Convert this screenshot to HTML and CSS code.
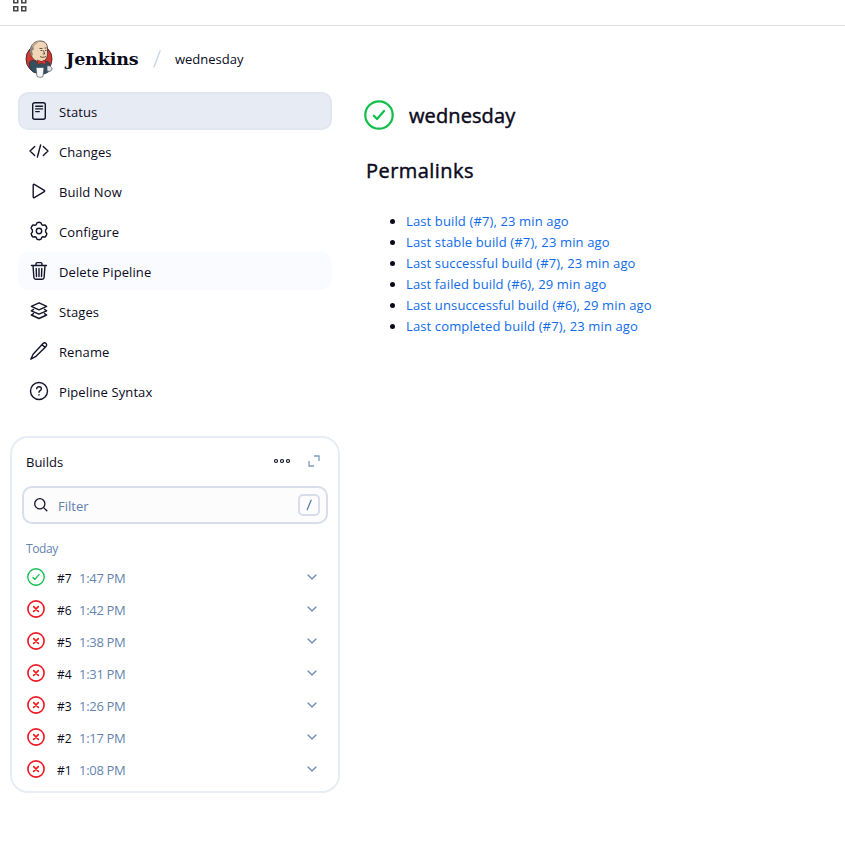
FILE: index.html
```html
<!DOCTYPE html>
<html lang="en">
<head>
<meta charset="utf-8">
<title>wednesday - Jenkins</title>
<link rel="stylesheet" href="styles.css">
</head>
<body>
<svg class="defs" aria-hidden="true">
  <symbol id="ok" viewBox="0 0 512 512"><g fill="none" stroke="currentColor" stroke-width="38" stroke-linecap="round" stroke-linejoin="round"><circle cx="256" cy="256" r="234"/><path d="M342 188 222 324l-54-56"/></g></symbol>
  <symbol id="bad" viewBox="0 0 512 512"><g fill="none" stroke="currentColor" stroke-width="46" stroke-linecap="round"><circle cx="256" cy="256" r="230"/><path d="m190 190 132 132M322 190 190 322"/></g></symbol>
  <symbol id="chev" viewBox="0 0 12 12"><path d="m2 4 4 4 4-4" fill="none" stroke="currentColor" stroke-width="1.3" stroke-linecap="round" stroke-linejoin="round"/></symbol>
</svg>
<div class="topbar">
  <svg width="16" height="16" viewBox="0 0 16 16" fill="none" stroke="#474747" stroke-width="1.600"><path d="M1.800 1.800h3.900v3.900H1.800zM9.800 1.800h3.900v3.900H9.800zM1.800 9.800h3.900v3.900H1.800zM9.800 9.800h3.900v3.900H9.800z"/></svg>
</div>
<header class="header">
  <svg class="logo" width="28" height="38" viewBox="0 0 28 38">
    <ellipse cx="14" cy="19" rx="13" ry="14" fill="#d33833" stroke="#3a2522" stroke-width=".9"/>
    <path d="M4.500 22c2-2 4-2 7 0l8-1 4 1c2 2 2 5 1 9-3 3-6 3-9 3.500L8 32C5 29 4 26 4.500 22Z" fill="#335061" stroke="#1c2d38" stroke-width=".6"/>
    <path d="M6 14C4 7 8 1 15 1c6 0 8 4 7.500 10 .5 7-2 10.500-6.500 10.500C12 22 7 20 6 14Z" fill="#f0d6b7" stroke="#3b302b" stroke-width=".8"/>
    <path d="M6 7c-2 3-1 6 0 9l2-1-1-4 2-2-1-3Z" fill="#8b8580"/>
    <path d="M7 5c2-3 5-4 8-4l-5 4-2 3Z" fill="#baa98f"/>
    <path d="M14.500 8.500h3M19.500 8h2M15.500 10.500h2M20 10.500h1.500M18.500 10.500l1.200 3.500h-2M15 16.500c2 1.200 4 1 6 0" fill="none" stroke="#55433c" stroke-width=".9"/>
    <path d="m12.500 20 4 1.500 4-1.500v4.500l-4-1.500-4 1.500Z" fill="#d33833" stroke="#73201d" stroke-width=".5"/>
    <path d="M11 27.500h8l-1 9c-2 1-4 1-6 0Z" fill="#f7f7f7" stroke="#45525a" stroke-width=".7"/>
    <path d="M22 26c3-1 5 1 5 3s-3 3-5 2Z" fill="#e3e1e0" stroke="#434f57" stroke-width=".7"/>
  </svg>
  <span class="brand">Jenkins</span>
  <svg class="slash" width="8" height="18" viewBox="0 0 8 18"><path d="M7 1 1 17" stroke="#ccd6e8" stroke-width="1.500" stroke-linecap="round"/></svg>
  <span class="crumb">wednesday</span>
</header>
<div class="layout">
  <aside class="side">
    <nav class="tasks">
      <a class="task active"><svg viewBox="0 0 20 20"><rect x="3.700" y="1.700" width="12.600" height="16.600" rx="2"/><path d="M6.700 5.200h6.800M6.700 7.900h6.800M6.700 10.600h3.600"/></svg><span>Status</span></a>
      <a class="task"><svg viewBox="0 0 20 20"><path d="M5.700 5.500 1 10l4.700 4.500M14.300 5.500 19 10l-4.700 4.500M11.600 4 8.400 16"/></svg><span>Changes</span></a>
      <a class="task"><svg viewBox="0 0 20 20"><path d="M4.200 4.100v11.800c0 .7.600 1 1.100.700l10-5.900c.5-.3.500-1 0-1.300l-10-6c-.5-.3-1.100 0-1.100.700Z"/></svg><span>Build Now</span></a>
      <a class="task"><svg viewBox="0 0 20 20"><circle cx="10" cy="10" r="2.700"/><path d="m8 1.800c1-.5 3-.5 4 0l.7 1.800 1.300.7 1.900-.4c1 .8 1.900 2.300 2 3.500L16.600 9v2l1.300 1.600c-.1 1.200-1 2.700-2 3.500l-1.900-.4-1.300.7-.7 1.800c-1 .5-3 .5-4 0l-.7-1.800-1.300-.7-1.900.4c-1-.8-1.900-2.300-2-3.500L3.400 11V9L2.100 7.400c.1-1.200 1-2.700 2-3.500l1.900.4 1.300-.7Z"/></svg><span>Configure</span></a>
      <a class="task hover"><svg viewBox="0 0 20 20"><path d="m4 4.500.9 12c.1 1.100.8 1.800 1.900 1.800h6.400c1.100 0 1.800-.7 1.900-1.800l.9-12M2.500 4.500h15M7 4V2.800C7 2 7.500 1.600 8.200 1.600h3.600c.7 0 1.200.4 1.200 1.200V4M7.200 7.500l.3 8M10 7.500v8M12.800 7.500l-.3 8"/></svg><span>Delete Pipeline</span></a>
      <a class="task"><svg viewBox="0 0 20 20"><path d="m10 1.800 7.700 3.500-7.700 3.500-7.700-3.500ZM4.500 8.400l-2.200 1.400 7.700 3.400 7.700-3.400-2.200-1.400M4.500 12.600l-2.200 1.400 7.700 3.500 7.700-3.500-2.200-1.400"/></svg><span>Stages</span></a>
      <a class="task"><svg viewBox="0 0 20 20"><path d="M14 2.600c1.100-1 2.200-1 3.100-.2.900 1 .8 2.100-.1 3.100L6.500 15.700l-4.700 2.500 2.300-4.900ZM13 3.600l3 3"/></svg><span>Rename</span></a>
      <a class="task"><svg viewBox="0 0 20 20"><circle cx="10" cy="10" r="8.500"/><path d="M7.700 7.700c.2-1.500 1.100-2 2.300-2 1.400 0 2.400.8 2.400 2 0 2-2.400 1.800-2.400 3.600M10 13.800v.2"/></svg><span>Pipeline Syntax</span></a>
    </nav>
    <section class="builds">
      <div class="builds-head">
        <span class="builds-title">Builds</span>
        <svg width="18" height="8" viewBox="0 0 18 8" fill="none" stroke="#14142b" stroke-width="1.200"><circle cx="3" cy="4" r="1.500"/><circle cx="9" cy="4" r="1.500"/><circle cx="15" cy="4" r="1.500"/></svg>
        <svg class="expand" width="12" height="12" viewBox="0 0 12 12" fill="none" stroke="#7f9bc2" stroke-width="1.300"><path d="M6 1h5v5M1 6v5h5"/></svg>
      </div>
      <div class="filter">
        <svg width="16" height="16" viewBox="0 0 16 16" fill="none" stroke="#14142b" stroke-width="1.300" stroke-linecap="round"><circle cx="6.800" cy="6.800" r="5.100"/><path d="m10.600 10.600 3.200 3.200"/></svg>
        <span class="placeholder">Filter</span>
        <span class="key"><svg width="8" height="14" viewBox="0 0 8 14"><path d="M6.300 1.800 2 12.200" stroke="#4f74a8" stroke-width="1.200"/></svg></span>
      </div>
      <div class="day">Today</div>
      <div class="build"><svg class="st ok"><use href="#ok"/></svg><span class="num">#7</span><span class="time">1:47 PM</span><svg class="chev"><use href="#chev"/></svg></div>
      <div class="build"><svg class="st bad"><use href="#bad"/></svg><span class="num">#6</span><span class="time">1:42 PM</span><svg class="chev"><use href="#chev"/></svg></div>
      <div class="build"><svg class="st bad"><use href="#bad"/></svg><span class="num">#5</span><span class="time">1:38 PM</span><svg class="chev"><use href="#chev"/></svg></div>
      <div class="build"><svg class="st bad"><use href="#bad"/></svg><span class="num">#4</span><span class="time">1:31 PM</span><svg class="chev"><use href="#chev"/></svg></div>
      <div class="build"><svg class="st bad"><use href="#bad"/></svg><span class="num">#3</span><span class="time">1:26 PM</span><svg class="chev"><use href="#chev"/></svg></div>
      <div class="build"><svg class="st bad"><use href="#bad"/></svg><span class="num">#2</span><span class="time">1:17 PM</span><svg class="chev"><use href="#chev"/></svg></div>
      <div class="build"><svg class="st bad"><use href="#bad"/></svg><span class="num">#1</span><span class="time">1:08 PM</span><svg class="chev"><use href="#chev"/></svg></div>
    </section>
  </aside>
  <main class="main">
    <h1><svg class="big ok"><use href="#ok"/></svg><span>wednesday</span></h1>
    <h2>Permalinks</h2>
    <ul>
      <li><a>Last build (#7), 23 min ago</a></li>
      <li><a>Last stable build (#7), 23 min ago</a></li>
      <li><a>Last successful build (#7), 23 min ago</a></li>
      <li><a>Last failed build (#6), 29 min ago</a></li>
      <li><a>Last unsuccessful build (#6), 29 min ago</a></li>
      <li><a>Last completed build (#7), 23 min ago</a></li>
    </ul>
  </main>
</div>
</body>
</html>
```
FILE: styles.css
```css
* { box-sizing: border-box; }
body { margin: 0; background: #fff; color: #0a0a1c; font: 13px/20px "Open Sans", "Noto Sans", sans-serif; }
svg { display: block; flex: none; }
.defs { width: 0; height: 0; position: absolute; }
.topbar { height: 26px; border-bottom: 1px solid #dedfe1; padding-left: 12px; overflow: hidden; }
.topbar svg { margin-top: -3px; }
.header { height: 66px; display: flex; align-items: center; padding-left: 25px; }
.logo { margin-top: -1px; }
.brand { margin-left: 13px; width: 73px; font: bold 17.5px/24px "DejaVu Serif", "Liberation Serif", serif; letter-spacing: -.15px; }
.slash { margin-left: 14px; }
.crumb { margin-left: 14px; }
.layout { display: flex; }
.side { width: 350px; flex: none; }
.tasks { display: flex; flex-direction: column; gap: 2px; padding: 0 18px; }
.task { height: 38px; display: flex; align-items: center; padding-left: 11px; gap: 10px; border-radius: 10px; letter-spacing: .1px; }
.task svg { width: 20px; height: 20px; fill: none; stroke: #14142b; stroke-width: 1.4; stroke-linecap: round; stroke-linejoin: round; }
.task span { padding-top: 2px; }
.active { background: #e7ebf3; border: 2px solid #e1e6f0; padding-left: 9px; }
.hover { background: #fafbfe; }
.builds { margin: 26px 10px 0; width: 330px; height: 357px; border: 2px solid #e8ecf4; border-radius: 18px; padding: 9px 10px 10px; }
.builds-head { height: 28px; display: flex; align-items: center; padding: 0 8px 0 4px; }
.builds-title { flex: 1; padding-top: 2px; }
.expand { margin-left: 17px; }
.filter { margin-top: 11px; height: 38px; border: 2px solid #d8ddea; border-radius: 10px; background: #fcfcfd; display: flex; align-items: center; padding: 0 6px 0 9px; }
.placeholder { flex: 1; margin-left: 9px; padding-top: 2px; color: #5f80b0; }
.key { width: 22px; height: 22px; border: 2px solid #d8ddea; border-radius: 5px; display: flex; align-items: center; justify-content: center; }
.day { margin-top: 15px; padding-left: 4px; font-size: 12px; letter-spacing: -.4px; color: #6584b0; }
.build { height: 32px; display: flex; align-items: center; padding: 0 10px 0 5px; }
.day + .build { margin-top: 2px; }
.st { width: 18px; height: 18px; }
.ok { color: #10bf4c; }
.bad { color: #f01820; }
.num { margin-left: 12px; width: 22px; padding-top: 3px; font-size: 12px; }
.time { flex: 1; padding-top: 2px; color: #6584b0; letter-spacing: -.3px; }
.chev { width: 12px; height: 12px; color: #6b8bb8; }
.main { padding: 8px 0 0 14px; }
h1, h2 { margin: 0; font: 400 20px/30px "Open Sans", "Noto Sans", sans-serif; -webkit-text-stroke: .45px currentColor; }
h1 { display: flex; align-items: center; gap: 15px; letter-spacing: .1px; }
h1 svg { margin-top: -1px; }
h1 span { padding-top: 1px; }
.big { width: 30px; height: 30px; }
h1 { height: 30px; }
h2 { margin: 26px 0 0 2px; letter-spacing: .45px; }
ul { margin: 25px 0 0; padding-left: 42px; line-height: 21px; letter-spacing: .13px; }
li a { color: #0f6be9; }
```
